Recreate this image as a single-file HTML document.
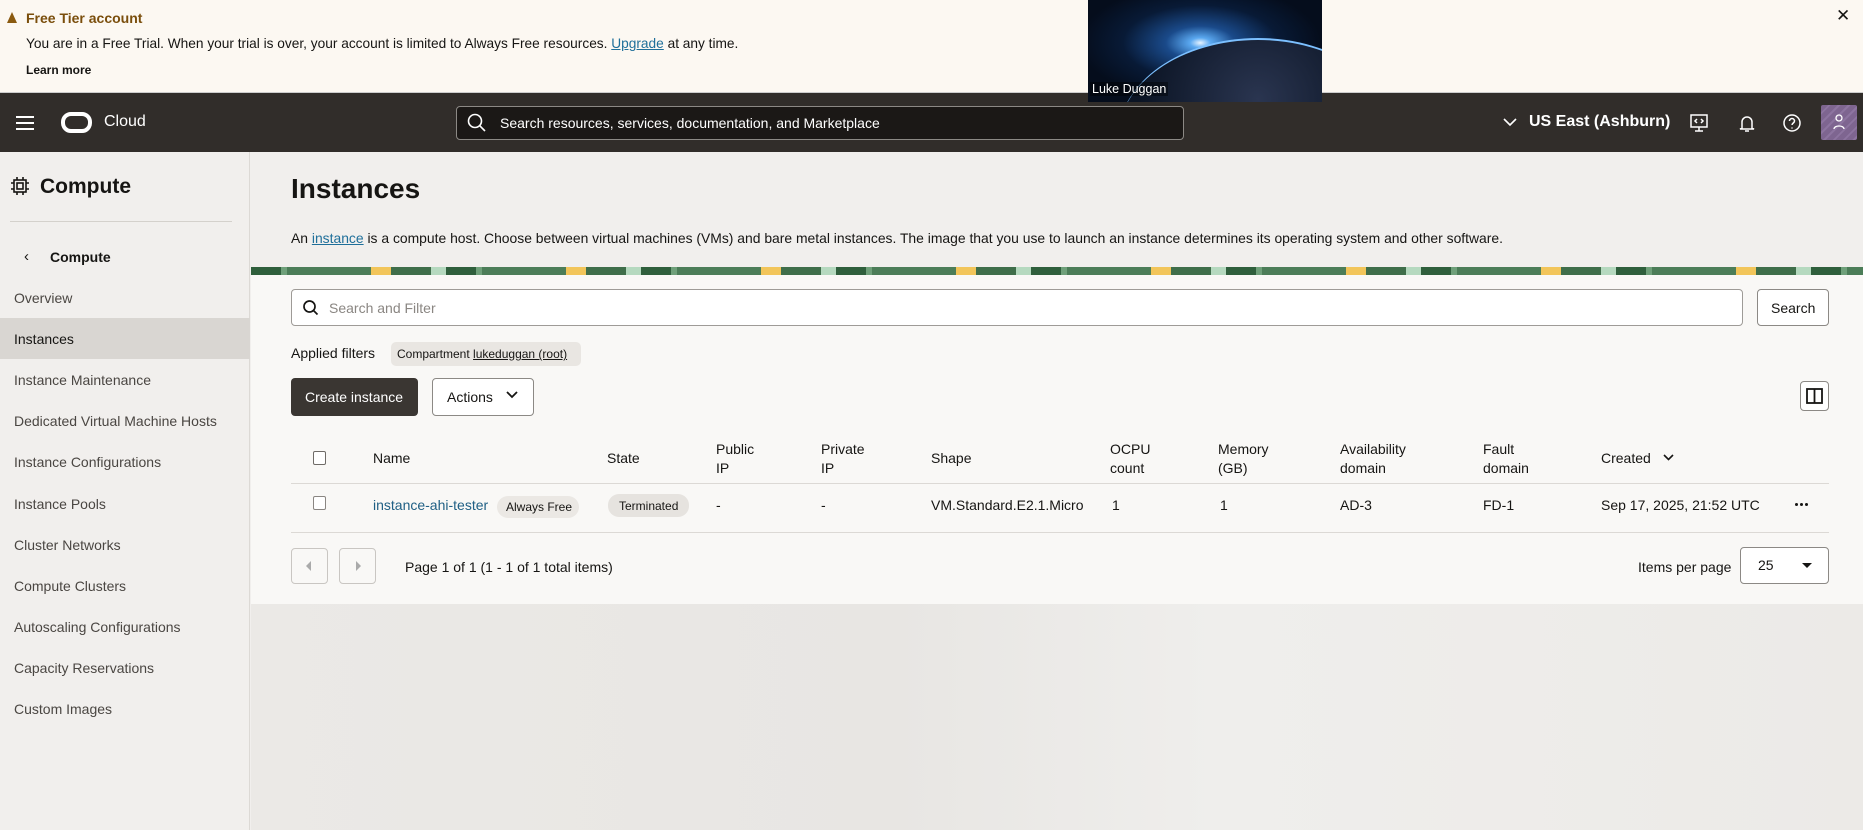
<!DOCTYPE html>
<html><head><meta charset="utf-8"><style>
*{box-sizing:border-box;margin:0;padding:0}
body{width:1863px;height:830px;overflow:hidden;font-family:"Liberation Sans",sans-serif;background:#f1efed;color:#161513;position:relative;font-size:14px}
.a{position:absolute;white-space:nowrap}
.banner{left:0;top:0;width:1863px;height:93px;background:#fcf8f2;border-bottom:1px solid #ccc}
.hdr{left:0;top:93px;width:1863px;height:59px;background:#312d2a;color:#fff}
.side{left:0;top:152px;width:250px;height:678px;background:#f1efed;border-right:1px solid #dcd9d5}
.it{left:14px;font-size:14px;color:#4a4642}
.main{left:251px;top:275px;width:1612px;height:329px;background:#f9f8f6}
.lower{left:251px;top:604px;width:1612px;height:226px;background:linear-gradient(90deg,#ebe9e6,#e8e6e3 40%,#efeeec 60%,#eceae7)}
.th{font-size:14px;color:#161513;line-height:19px}
.td{font-size:14px;color:#161513}
.btn{border:1px solid #8c8985;border-radius:4px;background:#fff}
</style></head><body>
<div class="a banner"></div>
<div class="a" style="left:7px;top:12px;width:0;height:0;border-left:5px solid transparent;border-right:5px solid transparent;border-bottom:11px solid #8a5a10"></div>
<div class="a" style="left:26px;top:10px;font-size:14px;font-weight:bold;color:#7a4e0c">Free Tier account</div>
<div class="a" style="left:26px;top:36px;font-size:13.7px">You are in a Free Trial. When your trial is over, your account is limited to Always Free resources. <span style="color:#1f6f9a;text-decoration:underline">Upgrade</span> at any time.</div>
<div class="a" style="left:26px;top:63px;font-size:12px;font-weight:bold">Learn more</div>
<div class="a" style="left:1836px;top:6px;font-size:17px">✕</div>
<div class="a hdr"></div>
<div class="a" style="left:1088px;top:0;width:234px;height:102px;background:radial-gradient(ellipse at 48% 42%,#e8f4ff 0,#5aa8f0 6%,#1a4a8a 20%,#081a36 45%,#050d1c 70%);overflow:hidden"><div class="a" style="left:30px;top:38px;width:280px;height:200px;border-radius:50%;background:radial-gradient(ellipse at 50% 30%,#2a3550,#0b1424 60%);border-top:2px solid #7cc0ff"></div><div class="a" style="left:2px;top:82px;font-size:12.5px;color:#fff;background:rgba(0,0,0,.4);padding:0 2px">Luke Duggan</div></div>
<div class="a" style="left:16px;top:116px;width:18px;height:2px;background:#fff;box-shadow:0 6px 0 #fff,0 12px 0 #fff"></div>
<div class="a" style="left:61px;top:112px;width:31px;height:21px;border:4px solid #fff;border-radius:10px"></div>
<div class="a" style="left:104px;top:113px;font-size:16px;color:#fff">Cloud</div>
<div class="a" style="left:456px;top:106px;width:728px;height:34px;background:#1b1816;border:1px solid #8c8985;border-radius:4px"></div>
<svg class="a" style="left:467px;top:113px" width="20" height="20"><circle cx="8" cy="8" r="6.5" fill="none" stroke="#fff" stroke-width="1.6"/><path d="M13 13l5 5" stroke="#fff" stroke-width="1.6"/></svg>
<div class="a" style="left:500px;top:115px;font-size:14px;color:#fff">Search resources, services, documentation, and Marketplace</div>
<svg class="a" style="left:1503px;top:117px" width="14" height="10"><path d="M1 2l6 6 6-6" fill="none" stroke="#fff" stroke-width="1.6"/></svg>
<div class="a" style="left:1529px;top:113px;font-size:16px;font-weight:bold;color:#fff">US East (Ashburn)</div>
<svg class="a" style="left:1689px;top:113px" width="20" height="20" fill="none" stroke="#fff" stroke-width="1.5"><rect x="2" y="2" width="16" height="12"/><path d="M10 14v4M6 18h8M8 6l-2 2 2 2M12 6l2 2-2 2"/></svg>
<svg class="a" style="left:1737px;top:113px" width="20" height="20" fill="none" stroke="#fff" stroke-width="1.5"><path d="M5 15V9a5 5 0 0110 0v6l2 1H3zM8 18h4"/></svg>
<svg class="a" style="left:1782px;top:113px" width="20" height="20" fill="none" stroke="#fff" stroke-width="1.5"><circle cx="10" cy="10" r="8"/><path d="M7.5 8a2.5 2.5 0 115 0c0 2-2.5 2-2.5 4M10 14.5v1"/></svg>
<div class="a" style="left:1821px;top:105px;width:36px;height:35px;background:repeating-linear-gradient(135deg,#7e6590 0,#7e6590 5px,#8d74a0 5px,#8d74a0 7px);border-radius:2px"></div>
<svg class="a" style="left:1831px;top:112px" width="16" height="20" fill="none" stroke="#fff" stroke-width="1.3"><circle cx="8" cy="6" r="3"/><path d="M3 17c0-4 10-4 10 0"/></svg>

<div class="a side"></div>
<svg class="a" style="left:11px;top:177px" width="18" height="18" fill="none" stroke="#161513" stroke-width="1.6"><rect x="3" y="3" width="12" height="12"/><rect x="6" y="6" width="6" height="6"/><path d="M6 0v3M12 0v3M6 15v3M12 15v3M0 6h3M0 12h3M15 6h3M15 12h3"/></svg>
<div class="a" style="left:40px;top:175px;font-size:21px;font-weight:bold">Compute</div>
<div class="a" style="left:10px;top:221px;width:222px;height:1px;background:#d4d1cc"></div>
<div class="a" style="left:24px;top:248px;font-size:15px">‹</div>
<div class="a" style="left:50px;top:249px;font-size:14px;font-weight:bold">Compute</div>
<div class="a" style="left:0;top:318px;width:250px;height:41px;background:#d9d6d2"></div>
<div class="a it" style="top:290px">Overview</div>
<div class="a it" style="top:331px;color:#161513">Instances</div>
<div class="a it" style="top:372px">Instance Maintenance</div>
<div class="a it" style="top:413px">Dedicated Virtual Machine Hosts</div>
<div class="a it" style="top:454px">Instance Configurations</div>
<div class="a it" style="top:496px">Instance Pools</div>
<div class="a it" style="top:537px">Cluster Networks</div>
<div class="a it" style="top:578px">Compute Clusters</div>
<div class="a it" style="top:619px">Autoscaling Configurations</div>
<div class="a it" style="top:660px">Capacity Reservations</div>
<div class="a it" style="top:701px">Custom Images</div>

<div class="a" style="left:291px;top:173px;font-size:28px;font-weight:bold">Instances</div>
<div class="a" style="left:291px;top:230px;font-size:13.9px">An <span style="color:#1f6f9a;text-decoration:underline">instance</span> is a compute host. Choose between virtual machines (VMs) and bare metal instances. The image that you use to launch an instance determines its operating system and other software.</div>
<div class="a" style="left:251px;top:267px;width:1612px;height:8px;background:repeating-linear-gradient(90deg,#2f5f3c 0,#2f5f3c 30px,#6fa07a 30px,#6fa07a 36px,#4c7d58 36px,#4c7d58 120px,#f2c55a 120px,#f2c55a 140px,#3f6e4a 140px,#3f6e4a 180px,#b5d9bf 180px,#b5d9bf 195px)"></div>
<div class="a main"></div>
<div class="a lower"></div>

<div class="a btn" style="left:291px;top:289px;width:1452px;height:37px;border-color:#9e9b97"></div>
<svg class="a" style="left:302px;top:299px" width="18" height="18" fill="none" stroke="#161513" stroke-width="1.7"><circle cx="7.5" cy="7.5" r="5.5"/><path d="M11.5 11.5l4 4"/></svg>
<div class="a" style="left:329px;top:300px;font-size:14px;color:#8a8682">Search and Filter</div>
<div class="a btn" style="left:1757px;top:289px;width:72px;height:37px"></div>
<div class="a" style="left:1771px;top:300px;font-size:14px">Search</div>
<div class="a" style="left:291px;top:345px;font-size:14px">Applied filters</div>
<div class="a" style="left:391px;top:342px;width:190px;height:24px;background:#e9e6e2;border-radius:5px"></div>
<div class="a" style="left:397px;top:347px;font-size:12px">Compartment <span style="text-decoration:underline">lukeduggan (root)</span></div>
<div class="a" style="left:291px;top:378px;width:127px;height:38px;background:#3a3632;border-radius:4px"></div>
<div class="a" style="left:305px;top:389px;font-size:14px;color:#fff">Create instance</div>
<div class="a btn" style="left:432px;top:378px;width:102px;height:38px"></div>
<div class="a" style="left:447px;top:389px;font-size:14px">Actions</div>
<svg class="a" style="left:506px;top:391px" width="12" height="9"><path d="M1 1l5 5 5-5" fill="none" stroke="#161513" stroke-width="1.8"/></svg>
<div class="a btn" style="left:1800px;top:381px;width:29px;height:30px"></div>
<svg class="a" style="left:1806px;top:388px" width="17" height="16" fill="none" stroke="#161513" stroke-width="1.8"><rect x="1" y="1" width="15" height="14"/><path d="M8.5 1v14"/></svg>

<div class="a" style="left:313px;top:451px;width:13px;height:14px;border:1px solid #6f6b67;border-radius:2px;background:#fff"></div>
<div class="a th" style="left:373px;top:449px">Name</div>
<div class="a th" style="left:607px;top:449px">State</div>
<div class="a th" style="left:716px;top:440px">Public<br>IP</div>
<div class="a th" style="left:821px;top:440px">Private<br>IP</div>
<div class="a th" style="left:931px;top:449px">Shape</div>
<div class="a th" style="left:1110px;top:440px">OCPU<br>count</div>
<div class="a th" style="left:1218px;top:440px">Memory<br>(GB)</div>
<div class="a th" style="left:1340px;top:440px">Availability<br>domain</div>
<div class="a th" style="left:1483px;top:440px">Fault<br>domain</div>
<div class="a th" style="left:1601px;top:449px">Created</div>
<svg class="a" style="left:1663px;top:454px" width="11" height="8"><path d="M1 1l4.5 4.5L10 1" fill="none" stroke="#161513" stroke-width="1.6"/></svg>
<div class="a" style="left:291px;top:483px;width:1538px;height:1px;background:#dcd9d5"></div>
<div class="a" style="left:313px;top:496px;width:13px;height:14px;border:1px solid #8a8682;border-radius:2px;background:#fff"></div>
<div class="a td" style="left:373px;top:497px;color:#1f5f84">instance-ahi-tester</div>
<div class="a" style="left:497px;top:496px;width:82px;height:22px;background:#ebe8e4;border-radius:11px"></div>
<div class="a" style="left:506px;top:500px;font-size:12px">Always Free</div>
<div class="a" style="left:608px;top:494px;width:81px;height:23px;background:#e6e3df;border-radius:11px"></div>
<div class="a" style="left:619px;top:499px;font-size:12px">Terminated</div>
<div class="a td" style="left:716px;top:497px">-</div>
<div class="a td" style="left:821px;top:497px">-</div>
<div class="a td" style="left:931px;top:497px">VM.Standard.E2.1.Micro</div>
<div class="a td" style="left:1112px;top:497px">1</div>
<div class="a td" style="left:1220px;top:497px">1</div>
<div class="a td" style="left:1340px;top:497px">AD-3</div>
<div class="a td" style="left:1483px;top:497px">FD-1</div>
<div class="a td" style="left:1601px;top:497px">Sep 17, 2025, 21:52 UTC</div>
<div class="a" style="left:1795px;top:503px;width:3px;height:3px;border-radius:50%;background:#161513;box-shadow:5px 0 0 #161513,10px 0 0 #161513"></div>
<div class="a" style="left:291px;top:532px;width:1538px;height:1px;background:#dcd9d5"></div>
<div class="a btn" style="left:291px;top:548px;width:37px;height:36px;border-color:#c9c6c2;background:#f9f8f6"></div>
<div class="a btn" style="left:339px;top:548px;width:37px;height:36px;border-color:#c9c6c2;background:#f9f8f6"></div>
<div class="a" style="left:306px;top:561px;width:0;height:0;border-top:5px solid transparent;border-bottom:5px solid transparent;border-right:5px solid #aaa"></div>
<div class="a" style="left:356px;top:561px;width:0;height:0;border-top:5px solid transparent;border-bottom:5px solid transparent;border-left:5px solid #aaa"></div>
<div class="a td" style="left:405px;top:559px">Page 1 of 1 (1 - 1 of 1 total items)</div>
<div class="a td" style="left:1638px;top:559px">Items per page</div>
<div class="a btn" style="left:1740px;top:547px;width:89px;height:37px"></div>
<div class="a td" style="left:1758px;top:557px">25</div>
<div class="a" style="left:1802px;top:563px;width:0;height:0;border-left:5px solid transparent;border-right:5px solid transparent;border-top:5px solid #161513"></div>
</body></html>
